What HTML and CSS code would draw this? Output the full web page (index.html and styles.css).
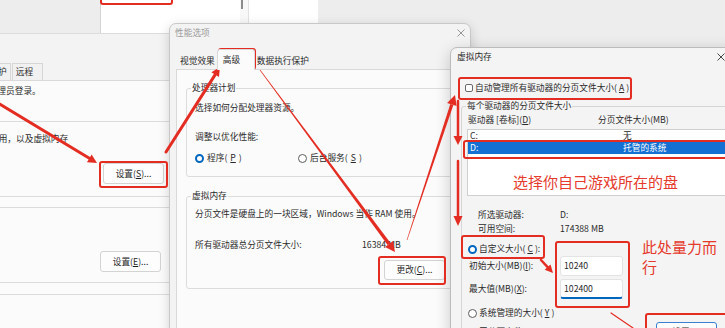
FILE: index.html
```html
<!DOCTYPE html>
<html lang="zh-CN">
<head>
  <meta charset="UTF-8">
  <meta name="viewport" content="width=device-width, initial-scale=1">
  <title>虚拟内存设置</title>
  <link rel="stylesheet" href="styles.css">
</head>
<body>
  <div class="desktop">
    <!-- window furthest back, only its lower edge shows -->
    <div class="back-list">
      <div class="back-list-main"></div>
      <div class="back-scroll"><span class="back-thumb"></span></div>
      <div class="back-list-side"></div>
    </div>

    <!-- 系统属性 -->
    <div class="win win-sys">
      <div class="sys-tabs">
        <span class="sys-tab">系统保护</span>
        <span class="sys-tab sys-tab-last">远程</span>
      </div>
      <div class="sys-panel">
        <p class="sys-note">要进行大多数更改，你必须作为管理员登录。</p>
        <div class="sys-group sys-group-perf">
          <p>视觉效果，处理器计划，内存使用，以及虚拟内存</p>
          <div class="btn-row"><button class="btn btn-sys">设置(<u>S</u>)...</button></div>
        </div>
        <div class="sys-group sys-group-user">
          <div class="btn-row"><button class="btn btn-sys">设置(<u>E</u>)...</button></div>
        </div>
        <div class="sys-group sys-group-start"></div>
      </div>
    </div>

    <!-- 性能选项 -->
    <div class="win win-perf">
      <div class="titlebar">
        <span class="title">性能选项</span>
        <svg class="close" width="8" height="8" viewBox="0 0 8 8"><path d="M0.5 0.5L7.5 7.5M7.5 0.5L0.5 7.5" stroke="#8a8a8a" stroke-width="0.9"/></svg>
      </div>
      <div class="tabs">
        <span class="tab">视觉效果</span>
        <span class="tab tab-active">高级</span>
        <span class="tab">数据执行保护</span>
      </div>
      <div class="tab-panel">
        <fieldset class="group group-cpu">
          <legend>处理器计划</legend>
          <p class="cpu-desc">选择如何分配处理器资源。</p>
          <p class="cpu-adjust">调整以优化性能:</p>
          <div class="radio-row">
            <label class="radio radio-prog"><span class="dot on"></span>程序(<u>P</u>)</label>
            <label class="radio"><span class="dot"></span>后台服务(<u>S</u>)</label>
          </div>
        </fieldset>
        <fieldset class="group group-vmem">
          <legend>虚拟内存</legend>
          <p class="vmem-desc">分页文件是硬盘上的一块区域，Windows 当作 RAM 使用。</p>
          <div class="vmem-total"><span class="vmem-label">所有驱动器总分页文件大小:</span><span>16384 MB</span></div>
          <div class="btn-row"><button class="btn btn-change">更改(<u>C</u>)...</button></div>
        </fieldset>
      </div>
    </div>

    <!-- 虚拟内存 -->
    <div class="win win-vm">
      <div class="titlebar titlebar-vm">
        <span class="title">虚拟内存</span>
        <svg class="close" width="8" height="8" viewBox="0 0 8 8"><path d="M0.5 0.5L7.5 7.5M7.5 0.5L0.5 7.5" stroke="#333" stroke-width="0.9"/></svg>
      </div>
      <label class="check-row"><span class="check"></span>自动管理所有驱动器的分页文件大小(<u>A</u>)</label>
      <fieldset class="group group-drives">
        <legend>每个驱动器的分页文件大小</legend>
        <div class="drive-head"><span class="col-drive">驱动器 [卷标](<u>D</u>)</span><span>分页文件大小(MB)</span></div>
        <div class="drive-list">
          <div class="drive-row"><span class="col-name">C:</span><span>无</span></div>
          <div class="drive-row selected"><span class="col-name">D:</span><span>托管的系统</span></div>
        </div>
        <div class="drive-info">
          <span>所选驱动器:</span><span>D:</span>
          <span>可用空间:</span><span>174388 MB</span>
        </div>
        <label class="radio radio-vm radio-custom"><span class="dot on"></span>自定义大小(<u>C</u>):</label>
        <div class="size-row"><span class="size-label">初始大小(MB)(<u>I</u>):</span><span class="field">10240</span></div>
        <div class="size-row"><span class="size-label">最大值(MB)(<u>X</u>):</span><span class="field field-focus">102400</span></div>
        <label class="radio radio-vm radio-system"><span class="dot"></span>系统管理的大小(<u>Y</u>)</label>
        <div class="none-row">
          <label class="radio radio-vm"><span class="dot"></span>无分页文件(<u>N</u>)</label>
          <button class="btn btn-set">设置(<u>S</u>)</button>
        </div>
      </fieldset>
    </div>

    <!-- red marks drawn over the screenshot -->
    <svg class="marks" width="725" height="328" viewBox="0 0 725 328">
      <g fill="none" stroke="#e42d22" stroke-width="2">
        <rect x="101" y="-6" width="71" height="10" rx="2"/>
        <rect x="100" y="162" width="67" height="25" rx="2"/>
        <rect x="219" y="49" width="36" height="20" rx="2"/>
        <rect x="379" y="257" width="66" height="27" rx="2"/>
        <rect x="459" y="78" width="172" height="21" rx="2"/>
        <rect x="464" y="141" width="270" height="17" rx="2"/>
        <rect x="462" y="236" width="82" height="22" rx="2"/>
        <rect x="556" y="242" width="73" height="65" rx="2"/>
        <rect x="646" y="314" width="90" height="30" rx="2"/>
      </g>
      <g stroke="#e42d22" fill="none" stroke-linecap="round">
        <line x1="-2" y1="103" x2="89.3" y2="158.3" stroke-width="3"/>
        <line x1="166" y1="152" x2="215.2" y2="74.6" stroke-width="3"/>
        <line x1="458" y1="101" x2="458" y2="137" stroke-width="2.5"/>
        <line x1="458" y1="161" x2="458" y2="217" stroke-width="2.5"/>
        <line x1="541" y1="260" x2="547.6" y2="267.1" stroke-width="2.5"/>
        <line x1="611" y1="313" x2="633" y2="328" stroke-width="1.2"/>
      </g>
      <g fill="#e42d22">
        <polygon points="97,163 86.97,162.2 91.63,154.5"/>
        <polygon points="220,67 218.98,77.01 211.38,72.19"/>
        <polygon points="260.24,69.82 390.49,242.9 387.59,245.04 259.76,70.18"/>
        <polygon points="395,252 385.02,246.95 393.06,240.99"/>
        <polygon points="407.29,240.09 453.38,105 450.34,104 406.71,239.91"/>
        <polygon points="455,95 456.61,106.07 447.11,102.93"/>
        <polygon points="458,145 453.5,136 462.5,136"/>
        <polygon points="458,226 453.5,216 462.5,216"/>
        <polygon points="553,273 544.64,269.84 550.52,264.42"/>
      </g>
    </svg>
    <p class="note note-drive">选择你自己游戏所在的盘</p>
    <p class="note note-size">此处量力而行</p>
  </div>
</body>
</html>
```

FILE: styles.css
```css
* {
  margin: 0;
  padding: 0;
  box-sizing: border-box;
}

html, body {
  width: 725px;
  height: 328px;
  overflow: hidden;
}

body {
  background: #ededed;
  font-family: "Noto Sans CJK SC", "Noto Sans", sans-serif;
  font-size: 8.7px;
  line-height: 12px;
  color: #2a2a2a;
  text-autospace: no-autospace;
}

u {
  text-underline-offset: 1px;
}

.desktop {
  position: relative;
  width: 725px;
  height: 328px;
  overflow: hidden;
}

/* window furthest back */
.back-list {
  position: absolute;
  left: 100px;
  top: -10px;
  width: 218px;
  height: 45px;
  display: flex;
}

.back-list-main {
  width: 140px;
  background: #fff;
  border-left: 1px solid #d4d4d4;
}

.back-scroll {
  width: 8px;
  background: #f8f8f8;
}

.back-thumb {
  display: block;
  width: 2px;
  height: 19px;
  margin-left: 1px;
  background: #8c8c8c;
}

.back-list-side {
  width: 70px;
  background: #fff;
  border-left: 1px solid #e2e2e2;
}

.win {
  position: absolute;
}

/* 系统属性 */
.win-sys {
  left: -215px;
  top: 33px;
  width: 400px;
  height: 310px;
  padding-top: 29px;
  background: #f3f3f3;
  border-top: 1px solid #dcdcdc;
}

.sys-tabs {
  display: flex;
  gap: 1px;
  height: 17px;
  padding-left: 183px;
}

.sys-tab {
  height: 17px;
  padding: 0 3px;
  line-height: 16px;
  background: #f1f1f1;
  border: 1px solid #d6d6d6;
  border-bottom: none;
}

.sys-tab-last {
  padding-right: 9px;
}

.sys-panel {
  height: 280px;
  padding: 4px 12px 0 82px;
  background: #fbfbfb;
  border-top: 1px solid #d9d9d9;
}

.sys-group {
  margin-left: 2px;
  border: 1px solid #dcdcdc;
  border-radius: 3px;
}

.sys-group-perf {
  margin-top: 24px;
  padding: 11px 8px 12px 7px;
}

.sys-group-perf .btn-row {
  margin-top: 18px;
}

.sys-group-user {
  margin-top: 10px;
  padding: 43px 11px 10px 7px;
}

.sys-group-start {
  margin-top: 11px;
  height: 40px;
}

.btn-row {
  display: flex;
  justify-content: flex-end;
}

.btn {
  height: 20px;
  font: inherit;
  color: #1f1f1f;
  background: #fdfdfd;
  border: 1px solid #d3d3d3;
  border-radius: 3px;
}

.btn-sys {
  width: 61px;
  height: 21px;
}

/* dialogs */
.win-perf {
  left: 169px;
  top: 23px;
  width: 302px;
  height: 318px;
  display: flex;
  flex-direction: column;
  background: #f3f3f3;
  border: 1px solid #c8c8c8;
  border-radius: 7px 7px 0 0;
  box-shadow: 0 3px 12px rgba(0, 0, 0, 0.16);
}

.titlebar {
  display: flex;
  justify-content: space-between;
  align-items: center;
  flex-shrink: 0;
  height: 18px;
  padding: 0 5px;
}

.title {
  color: #9b9b9b;
}

.tabs {
  position: relative;
  z-index: 1;
  display: flex;
  align-items: flex-end;
  height: 19px;
  margin: 9px 0 -1px;
  padding-left: 8px;
}

.tab {
  height: 19px;
  padding: 0 2px;
  line-height: 19px;
}

.tab-active {
  width: 38px;
  height: 21px;
  padding-left: 5px;
  background: #fbfbfb;
  border: 1px solid #d9d9d9;
  border-bottom: none;
  border-radius: 3px 3px 0 0;
}

.tab-panel {
  flex: 1;
  margin: 0 6px 8px;
  background: #fbfbfb;
  border: 1px solid #d9d9d9;
}

.group {
  min-width: 0;
  border: 1px solid #dcdcdc;
  border-radius: 3px;
}

.group legend {
  padding: 0 1px;
  margin-left: -4px;
}

.group-cpu {
  margin: 12px 7px 0 9px;
  padding: 0 8px 12px;
}

.cpu-desc {
  margin-top: 8px;
}

.cpu-adjust {
  margin-top: 17px;
}

.radio-row {
  display: flex;
  margin-top: 9px;
}

.radio {
  display: flex;
  align-items: center;
  gap: 3px;
}

.radio-prog {
  width: 103px;
}

.dot {
  flex-shrink: 0;
  width: 9px;
  height: 9px;
  background: #fff;
  border: 1px solid #5d5d5d;
  border-radius: 50%;
}

.dot.on {
  border: 2.6px solid #0067c0;
}

.group-vmem {
  margin: 13px 7px 0 9px;
  padding: 0 10px 8px 8px;
}

.vmem-desc {
  margin-top: 6px;
  white-space: nowrap;
}

.vmem-total {
  display: flex;
  margin-top: 19px;
}

.vmem-label {
  width: 167px;
}

.group-vmem .btn-row {
  margin-top: 9px;
}

.btn-change {
  width: 61px;
}

/* 虚拟内存 */
.win-vm {
  left: 450px;
  top: 47px;
  width: 290px;
  height: 300px;
  background: #f4f4f4;
  border: 1px solid #bcbcbc;
  border-radius: 7px 7px 0 0;
  box-shadow: 0 4px 16px rgba(0, 0, 0, 0.2);
}

.titlebar-vm {
  padding: 0 14px 0 6px;
}

.titlebar-vm .title {
  color: #2b2b2b;
}

.check-row {
  display: flex;
  align-items: center;
  gap: 2px;
  margin-top: 16px;
  padding-left: 14px;
}

.check {
  width: 8px;
  height: 8px;
  background: #fff;
  border: 1px solid #6b6b6b;
  border-radius: 2px;
}

.group-drives {
  margin: 6px -20px 0 10px;
  padding: 0 0 0 6px;
  border-color: #d6d6d6;
}

.group-drives legend {
  margin-left: -2px;
}

.drive-head {
  display: flex;
  margin-top: 2px;
}

.col-drive {
  width: 130px;
}

.drive-list {
  height: 67px;
  margin: 3px 0 0 -1px;
  background: #fff;
  border: 1px solid #cfcfcf;
}

.drive-row {
  display: flex;
  height: 12px;
  padding-left: 2px;
}

.drive-row.selected {
  color: #fff;
  background: #1470d2;
}

.col-name {
  width: 153px;
}

.drive-info {
  display: grid;
  grid-template-columns: 82px auto;
  margin: 12px 0 0 10px;
  line-height: 14px;
}

.radio-vm {
  gap: 2px;
}

.radio-custom {
  margin-top: 7px;
}

.size-row {
  display: flex;
  align-items: center;
  margin-top: 1px;
  padding-left: 1px;
}

.size-row + .size-row {
  margin-top: 3px;
}

.size-label {
  width: 91px;
}

.field {
  width: 63px;
  height: 20px;
  padding-left: 3px;
  line-height: 18px;
  background: #fff;
  border: 1px solid #e3e3e3;
  border-radius: 3px;
}

.field-focus {
  border-bottom: 2px solid #0067c0;
}

.radio-system {
  margin-top: 8px;
}

.none-row {
  display: flex;
  align-items: center;
  margin-top: 3px;
}

.none-row .radio {
  width: 188px;
}

.btn-set {
  width: 61px;
  border-color: #3a7fd0;
}

/* red marks */
.marks {
  position: absolute;
  left: 0;
  top: 0;
}

.note {
  position: absolute;
  font-size: 15px;
  line-height: 20px;
  color: #e53a2c;
}

.note-drive {
  left: 513px;
  top: 172px;
  white-space: nowrap;
}

.note-size {
  left: 642px;
  top: 237px;
  width: 78px;
}
```
